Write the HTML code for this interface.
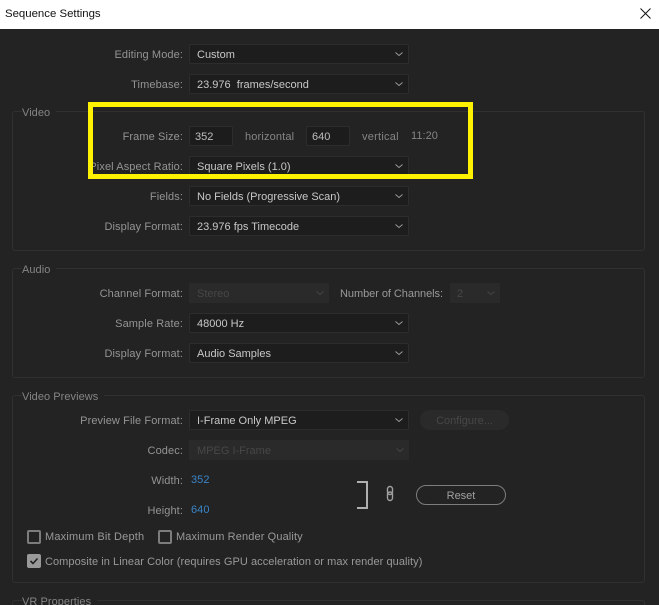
<!DOCTYPE html>
<html><head><meta charset="utf-8">
<style>
html,body{margin:0;padding:0;background:#232323}
#p{position:relative;width:659px;height:605px;overflow:hidden;background:#232323;font-family:"Liberation Sans",sans-serif;font-size:11px;color:#999}
#t{position:absolute;left:0;top:0;width:659px;height:29px;background:#fff;color:#111;font-size:11.4px;line-height:29px;text-indent:5px}
.g{position:absolute;left:12px;width:631px;border:1px solid #303030;border-radius:3px;box-sizing:content-box}
.gl{position:absolute;left:22px;background:#232323;padding:1px 6px 0 0;color:#858585;line-height:14px;white-space:nowrap;letter-spacing:.05px}
.l{position:absolute;right:476px;padding-top:1px;line-height:20px;white-space:nowrap;letter-spacing:.1px;color:#949494}
.s{position:absolute;left:189px;width:218px;height:18px;background:#1d1d1d;border:1px solid #2d2d2d;border-radius:2px;color:#c8c8c8;line-height:20px;text-indent:7px;white-space:pre}
.s svg,.d svg{position:absolute;right:3px;top:5px}
.d{position:absolute;height:20px;background:#2a2a2a;color:#474747;line-height:22px;text-indent:8px;border-radius:1px}
.i{position:absolute;width:42px;height:18px;top:126px;background:#1c1c1c;border:1px solid #2d2d2d;border-radius:2px;color:#bebebe;line-height:20px;text-indent:5px}
.x{position:absolute;white-space:nowrap;line-height:20px;padding-top:1px;letter-spacing:.05px}
.c{position:absolute;left:27px;width:10px;height:10px;border:2px solid #7c7c7c;border-radius:2px}
.b{color:#3a85c8}
</style></head><body>
<div id="p">
<div id="t">Sequence Settings</div>
<svg style="position:absolute;left:639px;top:7px" width="13" height="13" viewBox="0 0 13 13"><path d="M1.5 1.5L11.5 11.5M11.5 1.5L1.5 11.5" stroke="#111" stroke-width="1" fill="none"/></svg>

<div class="g" style="top:111px;height:138px"></div>
<div class="g" style="top:268px;height:108px"></div>
<div class="g" style="top:395px;height:186px"></div>
<div class="g" style="top:600px;height:30px"></div>
<div class="gl" style="top:105px">Video</div>
<div class="gl" style="top:262px">Audio</div>
<div class="gl" style="top:389px">Video Previews</div>
<div class="gl" style="top:594px">VR Properties</div>

<div class="l" style="top:44px">Editing Mode:</div>
<div class="s" style="top:44px">Custom<svg width="12" height="8" viewBox="0 0 12 8"><path d="M2.5 2.5L6 5.5L9.5 2.5" stroke="#9a9a9a" fill="none"/></svg></div>
<div class="l" style="top:74px">Timebase:</div>
<div class="s" style="top:74px">23.976  frames/second<svg width="12" height="8" viewBox="0 0 12 8"><path d="M2.5 2.5L6 5.5L9.5 2.5" stroke="#9a9a9a" fill="none"/></svg></div>

<div class="l" style="top:126px">Frame Size:</div>
<div class="i" style="left:189px">352</div>
<div class="x" style="left:245px;top:126px;color:#858585;letter-spacing:.15px">horizontal</div>
<div class="i" style="left:306px">640</div>
<div class="x" style="left:362px;top:126px;color:#858585;letter-spacing:.25px">vertical</div>
<div class="x" style="left:411px;top:125px;color:#858585">11:20</div>

<div class="l" style="top:156px">Pixel Aspect Ratio:</div>
<div class="s" style="top:156px">Square Pixels (1.0)<svg width="12" height="8" viewBox="0 0 12 8"><path d="M2.5 2.5L6 5.5L9.5 2.5" stroke="#9a9a9a" fill="none"/></svg></div>
<div class="l" style="top:186px">Fields:</div>
<div class="s" style="top:186px">No Fields (Progressive Scan)<svg width="12" height="8" viewBox="0 0 12 8"><path d="M2.5 2.5L6 5.5L9.5 2.5" stroke="#9a9a9a" fill="none"/></svg></div>
<div class="l" style="top:216px">Display Format:</div>
<div class="s" style="top:216px">23.976 fps Timecode<svg width="12" height="8" viewBox="0 0 12 8"><path d="M2.5 2.5L6 5.5L9.5 2.5" stroke="#9a9a9a" fill="none"/></svg></div>

<div class="l" style="top:283px">Channel Format:</div>
<div class="d" style="left:189px;top:283px;width:140px">Stereo<svg style="top:6px" width="12" height="8" viewBox="0 0 12 8"><path d="M2.5 2.5L6 5.5L9.5 2.5" stroke="#454545" fill="none"/></svg></div>
<div class="x" style="left:340px;top:283px;letter-spacing:-.05px">Number of Channels:</div>
<div class="d" style="left:450px;top:283px;width:50px;text-indent:7px">2<svg style="top:6px" width="12" height="8" viewBox="0 0 12 8"><path d="M2.5 2.5L6 5.5L9.5 2.5" stroke="#454545" fill="none"/></svg></div>
<div class="l" style="top:313px">Sample Rate:</div>
<div class="s" style="top:313px">48000 Hz<svg width="12" height="8" viewBox="0 0 12 8"><path d="M2.5 2.5L6 5.5L9.5 2.5" stroke="#9a9a9a" fill="none"/></svg></div>
<div class="l" style="top:343px">Display Format:</div>
<div class="s" style="top:343px">Audio Samples<svg width="12" height="8" viewBox="0 0 12 8"><path d="M2.5 2.5L6 5.5L9.5 2.5" stroke="#9a9a9a" fill="none"/></svg></div>

<div class="l" style="top:410px">Preview File Format:</div>
<div class="s" style="top:410px">I-Frame Only MPEG<svg width="12" height="8" viewBox="0 0 12 8"><path d="M2.5 2.5L6 5.5L9.5 2.5" stroke="#9a9a9a" fill="none"/></svg></div>
<div style="position:absolute;left:420px;top:410px;width:89px;height:20px;border-radius:10px;background:#2a2a2a;color:#474747;text-align:center;line-height:22px">Configure...</div>
<div class="l" style="top:440px">Codec:</div>
<div class="d" style="left:189px;top:440px;width:220px">MPEG I-Frame<svg style="top:6px" width="12" height="8" viewBox="0 0 12 8"><path d="M2.5 2.5L6 5.5L9.5 2.5" stroke="#454545" fill="none"/></svg></div>
<div class="l" style="top:470px">Width:</div>
<div class="x b" style="left:191px;top:469px">352</div>
<div class="l" style="top:500px">Height:</div>
<div class="x b" style="left:191px;top:499px">640</div>

<svg style="position:absolute;left:350px;top:475px" width="50" height="35" viewBox="0 0 50 35"><path d="M7 7H17V33H7" stroke="#b0b0b0" stroke-width="2" fill="none"/><rect x="37.5" y="11.5" width="5" height="8" rx="2.5" stroke="#a0a0a0" stroke-width="1.4" fill="none"/><rect x="37.5" y="17" width="5" height="8.5" rx="2.5" stroke="#a0a0a0" stroke-width="1.4" fill="none"/></svg>
<div style="position:absolute;left:416px;top:485px;width:88px;height:18px;border:1px solid #7d7d7d;border-radius:10px;color:#a0a0a0;text-align:center;line-height:20px">Reset</div>

<div class="c" style="top:530px"></div>
<div class="x" style="left:45px;top:526px;letter-spacing:.2px">Maximum Bit Depth</div>
<div class="c" style="left:158px;top:530px"></div>
<div class="x" style="left:176px;top:526px;letter-spacing:.12px">Maximum Render Quality</div>
<div class="c" style="top:554px;background:#999;border-color:#999"><svg style="position:absolute;left:0;top:0" width="10" height="10" viewBox="0 0 10 10"><path d="M1.5 5L4 7.5L8.5 2.5" stroke="#222" stroke-width="1.6" fill="none"/></svg></div>
<div class="x" style="left:45px;top:551px;letter-spacing:.06px">Composite in Linear Color (requires GPU acceleration or max render quality)</div>

<div style="position:absolute;left:88px;top:102px;width:375px;height:67px;border:5px solid #fff200"></div>
</div>
</body></html>
